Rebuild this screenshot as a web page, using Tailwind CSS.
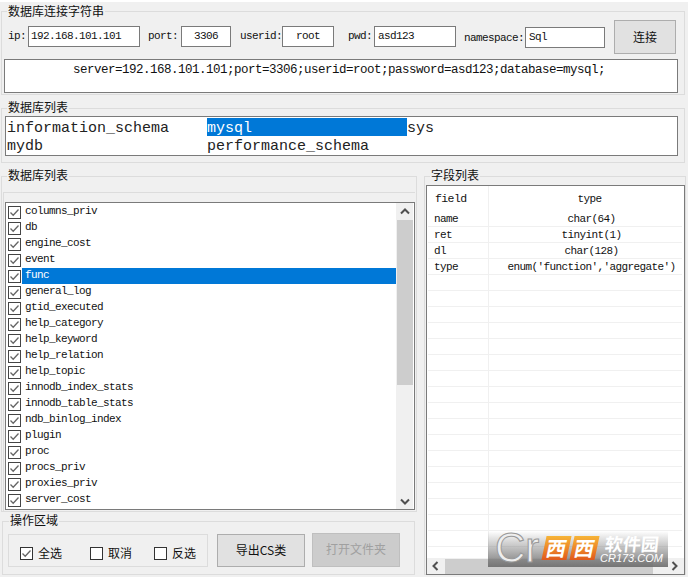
<!doctype html>
<html lang="zh">
<head>
<meta charset="utf-8">
<script src="https://cdn.jsdelivr.net/npm/@tailwindcss/browser@4"></script>
</head>
<body class="m-0">
<div class="relative w-[688px] h-[577px] overflow-hidden bg-[#f0f0f0] border-t-2 border-white text-[12px] leading-[16px] text-[#111] font-['Liberation_Mono','Noto_Sans_CJK_SC',monospace]">

  <!-- connection group -->
  <section class="relative ml-[1px] mt-[9px] w-[684px] h-[84px] border border-[#dcdcdc] box-border">
    <h2 class="absolute left-[5px] top-[-8px] px-[1px] bg-[#f0f0f0] text-[12px] leading-[14px] font-normal font-['Noto_Sans_CJK_SC',sans-serif]">数据库连接字符串</h2>
    <div class="flex items-start pt-[14px] h-[47px] text-[11px] tracking-[-0.6px]">
      <span class="ml-[6px] w-[20px] leading-[21px]">ip:</span>
      <span class="w-[112px] h-[21px] border border-[#7a7a7a] bg-white px-[2px] text-left leading-[19px]">192.168.101.101</span>
      <span class="ml-[8px] w-[33px] leading-[21px]">port:</span>
      <span class="w-[50px] h-[21px] border border-[#7a7a7a] bg-white text-center leading-[19px]">3306</span>
      <span class="ml-[9px] w-[42px] leading-[21px]">userid:</span>
      <span class="w-[52px] h-[21px] border border-[#7a7a7a] bg-white text-center leading-[19px]">root</span>
      <span class="ml-[14px] w-[26px] leading-[21px]">pwd:</span>
      <span class="w-[82px] h-[21px] border border-[#7a7a7a] bg-white px-[3px] leading-[19px]">asd123</span>
      <span class="ml-[8px] w-[61px] mt-[2px] leading-[21px]">namespace:</span>
      <span class="w-[80px] h-[21px] mt-[1px] border border-[#7a7a7a] bg-white px-[3px] leading-[19px]">Sql</span>
      <button class="ml-[9px] -mt-[6px] w-[62px] h-[34px] border border-[#adadad] bg-[#e1e1e1] text-[12px] font-['Noto_Sans_CJK_SC',sans-serif] tracking-normal">连接</button>
    </div>
    <div class="ml-[2px] w-[674px] h-[34px] border border-[#7a7a7a] bg-white text-center text-[12.5px] tracking-[-0.5px] leading-[20px] pr-[4px]">server=192.168.101.101;port=3306;userid=root;password=asd123;database=mysql;</div>
  </section>

  <!-- database list -->
  <section class="relative ml-[1px] mt-[13px] w-[684px] h-[55px] border border-[#dcdcdc] box-border pl-[3px] pt-[7px]">
    <h2 class="absolute left-[5px] top-[-9px] px-[1px] bg-[#f0f0f0] text-[12px] leading-[14px] font-normal font-['Noto_Sans_CJK_SC',sans-serif]">数据库列表</h2>
    <div class="w-[673px] h-[40px] border border-[#7a7a7a] bg-white pl-[1px] pt-[1px] grid grid-cols-[200px_200px_200px] auto-rows-[18px] text-[15px] leading-[21px] text-[#222]">
      <div>information_schema</div><div class="bg-[#0078d7] text-white">mysql</div><div>sys</div>
      <div>mydb</div><div>performance_schema</div>
    </div>
  </section>

  <div class="flex mt-[13px]">
    <!-- left column -->
    <div class="ml-[1px] w-[417px]">
      <section class="relative w-[416px] h-[336px] border border-[#dcdcdc] box-border pl-[1px] pt-[15px]">
        <h2 class="absolute left-[5px] top-[-9px] px-[1px] bg-[#f0f0f0] text-[12px] leading-[14px] font-normal font-['Noto_Sans_CJK_SC',sans-serif]">数据库列表</h2>
        <div class="w-[412px] h-[319px] border-t border-l border-[#dcdcdc] pl-[1px] pt-[9px]">
          <div class="flex w-[410px] h-[308px] border border-[#7a7a7a] bg-white">
            <ul id="tables" class="w-[390px] pt-[1px] text-[11px] tracking-[-0.6px]"></ul>
            <div class="relative w-[17px] bg-[#f0f0f0] flex flex-col items-center">
              <svg class="mt-[5px]" width="10" height="7" viewBox="0 0 10 7"><path d="M1 5.5 5 1.5 9 5.5" fill="none" stroke="#505050" stroke-width="2"/></svg>
              <div class="mt-[5px] w-[16px] h-[165px] bg-[#cdcdcd]"></div>
              <svg class="absolute bottom-[4px]" width="10" height="7" viewBox="0 0 10 7"><path d="M1 1.5 5 5.5 9 1.5" fill="none" stroke="#505050" stroke-width="2"/></svg>
            </div>
          </div>
        </div>
      </section>

      <!-- operations -->
      <section class="relative ml-[1px] mt-[9px] w-[413px] h-[54px] border border-[#dcdcdc] box-border font-['Noto_Sans_CJK_SC',sans-serif]">
        <h2 class="absolute left-[6px] top-[-9px] px-[1px] bg-[#f0f0f0] text-[12px] leading-[14px] font-normal">操作区域</h2>
        <div class="flex items-start pt-[12px] pl-[5px]">
          <div class="flex items-center w-[200px] h-[33px] border border-[#dcdcdc] pt-[5px] pl-[11px]">
            <span class="w-[13px] h-[13px] border border-[#333] bg-white flex items-center justify-center"><svg width="11" height="11" viewBox="0 0 11 11"><path d="M1.5 5.5 4.2 8.3 9.5 2.5" fill="none" stroke="#666" stroke-width="1.3"/></svg></span>
            <span class="ml-[5px] w-[39px]">全选</span>
            <span class="ml-[13px] w-[13px] h-[13px] border border-[#333] bg-white"></span>
            <span class="ml-[5px] w-[41px]">取消</span>
            <span class="ml-[5px] w-[13px] h-[13px] border border-[#333] bg-white"></span>
            <span class="ml-[5px]">反选</span>
          </div>
          <button class="ml-[9px] w-[88px] h-[33px] border border-[#adadad] bg-[#e1e1e1] text-[12px] pb-[2px]">导出CS类</button>
          <button class="ml-[7px] -mt-[1px] w-[88px] h-[34px] border border-[#bfbfbf] bg-[#cccccc] text-[12px] text-[#a0a0a0] pb-[2px]">打开文件夹</button>
        </div>
      </section>
    </div>

    <!-- fields -->
    <section class="relative ml-[6px] w-[262px] h-[399px] border border-[#dcdcdc] box-border pl-[1px] pt-[8px]">
      <h2 class="absolute left-[5px] top-[-9px] px-[1px] bg-[#f0f0f0] text-[12px] leading-[14px] font-normal font-['Noto_Sans_CJK_SC',sans-serif]">字段列表</h2>
      <div class="relative w-[259px] h-[390px] border border-[#7a7a7a] bg-white overflow-hidden text-[11px] tracking-[-0.6px]">
        <div class="flex h-[25px] leading-[26px]">
          <div class="w-[62px] pl-[8px] border-r border-[#f0f0f0] text-[11.5px]">field</div>
          <div class="flex-1 text-center pl-[6px]">type</div>
        </div>
        <div id="fields"></div>
        <div class="absolute left-0 right-0 bottom-0 h-[16px] bg-[#f0f0f0] flex items-center">
          <svg class="ml-[5px]" width="7" height="10" viewBox="0 0 7 10"><path d="M5.5 1 1.5 5 5.5 9" fill="none" stroke="#505050" stroke-width="2"/></svg>
          <div class="ml-[6px] w-[208px] h-[15px] bg-[#cdcdcd]"></div>
          <svg class="ml-[18px]" width="7" height="10" viewBox="0 0 7 10"><path d="M1.5 1 5.5 5 1.5 9" fill="none" stroke="#505050" stroke-width="2"/></svg>
        </div>
      </div>
    </section>
  </div>

  <!-- watermark -->
  <div class="absolute left-[488px] top-[529px] w-[180px] h-[36px] bg-gradient-to-b from-white/10 to-[#6b6b6b]/90 font-['Noto_Sans_CJK_SC',sans-serif]">
    <span class="absolute left-[7px] top-0 text-[42px] leading-[34px] text-[#eeeeee] font-['Liberation_Sans',sans-serif] [-webkit-text-stroke:1px_#999]">Cr</span>
    <div class="absolute left-[56px] top-[5px] flex gap-[3px]">
      <span class="w-[25px] h-[24px] -skew-x-12 bg-gradient-to-b from-[#f6b437] to-[#e0581c] text-white text-[20px] leading-[23px] font-bold text-center">西</span>
      <span class="w-[25px] h-[24px] -skew-x-12 bg-gradient-to-b from-[#f6b437] to-[#e0581c] text-white text-[20px] leading-[23px] font-bold text-center">西</span>
    </div>
    <div class="absolute left-[117px] top-[3px] text-white text-[18px] leading-[18px] font-bold whitespace-nowrap -skew-x-6">软件园</div>
    <div class="absolute left-[112px] top-[21px] text-white text-[11px] leading-[12px] italic font-['Liberation_Sans',sans-serif]">CR173.COM</div>
  </div>
</div>

<script>
  const names = ["columns_priv","db","engine_cost","event","func","general_log","gtid_executed","help_category","help_keyword","help_relation","help_topic","innodb_index_stats","innodb_table_stats","ndb_binlog_index","plugin","proc","procs_priv","proxies_priv","server_cost"];
  document.getElementById("tables").innerHTML = names.map((n, i) => `
    <li class="flex items-center h-[16px]">
      <span class="ml-[2px] w-[13px] h-[13px] border border-[#444] bg-white flex items-center justify-center shrink-0"><svg width="11" height="11" viewBox="0 0 11 11"><path d="M1.5 5.5 4.2 8.3 9.5 2.5" fill="none" stroke="#666" stroke-width="1.3"/></svg></span>
      <span class="ml-[1px] pl-[3px] flex-1 h-[16px] leading-[15px] ${n === "func" ? "bg-[#0078d7] text-white" : ""}">${n}</span>
    </li>`).join("");
  const rows = [["name","char(64)"],["ret","tinyint(1)"],["dl","char(128)"],["type","enum('function','aggregate')"]];
  while (rows.length < 22) rows.push(["",""]);
  document.getElementById("fields").innerHTML = rows.map(r => `
    <div class="flex h-[16px] leading-[17px] ml-[1px] mr-[2px] border-b border-[#f0f0f0]">
      <div class="w-[61px] pl-[6px] border-r border-[#f0f0f0]">${r[0]}</div>
      <div class="flex-1 text-center whitespace-nowrap pl-[12px]">${r[1]}</div>
    </div>`).join("");
</script>
</body>
</html>
